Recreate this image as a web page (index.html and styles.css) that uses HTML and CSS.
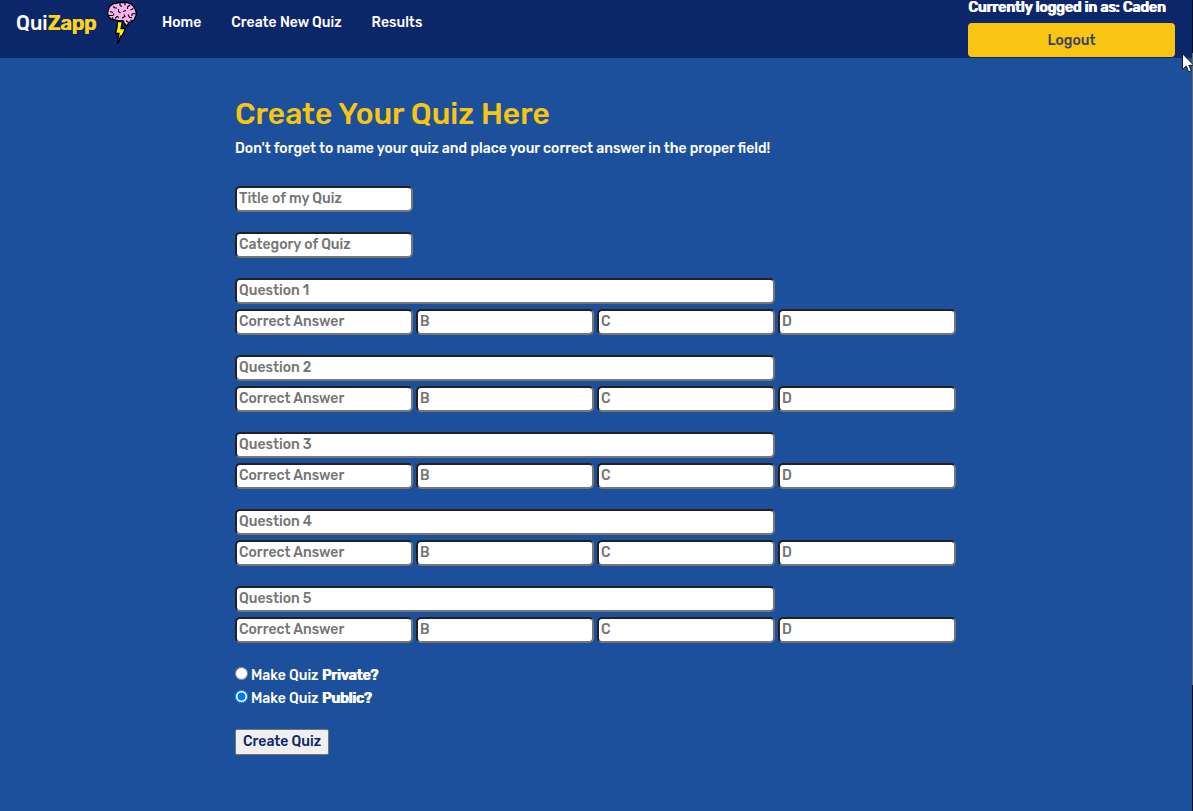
FILE: index.html
```html
<!DOCTYPE html>
<html lang="en">
<head>
<meta charset="utf-8">
<title>QuiZapp - Create Quiz</title>
<link rel="stylesheet" href="styles.css">
</head>
<body>
<div class="page">
  <header class="navbar">
    <a class="brand" href="#"><span class="brand-name">Qui<b class="brand-zap">Zapp</b></span>
      <svg class="brand-logo" viewBox="0 0 32 44" aria-hidden="true">
        <path d="M11.5 21.5h5L15 28.500h4.500L16.500 35l-2 1.500-2 6-1 1 .5-4 1-6h-3.500l1.500-6z" fill="#fff200" stroke="#000" stroke-width="1.3"/>
        <path d="M9 3.500l4-1h8l4 1.500 3 3 2 4.500v4l-2 4.500-3 2-2.500.5-1 3h-1.500l-2-3-1-2-4 .5-4-1-4-1-2.500-2.500-1-4 2-6 4-3z" fill="#f8b4f0" stroke="#000" stroke-width="1.3"/>
        <path d="M7 6.500l2 1.500h2M4 11.500l3 1M3 15.500h4l1-2M14 3v2.500l2 1M19 3v2.500M24 5l-2.500 2v2M27.500 8.500l-3 1.500M12.500 9v2.500l2 1.500M17 11.500l3-1M29 13.500l-3 .5v2M18 14.500l1 2-3 1.500M9 18.500l2-2 2 1M22 14.500l1.500 3h2.500M27 20.500l-3-.5M20 20.500l2 1.500M6 18.500l1-1" fill="none" stroke="#000" stroke-width="1.1"/>
      </svg>
    </a>
    <nav class="links">
      <a href="#">Home</a>
      <a href="#">Create New Quiz</a>
      <a href="#">Results</a>
    </nav>
    <div class="account">
      <strong class="user">Currently logged in as: Caden</strong>
      <button class="logout" type="button">Logout</button>
    </div>
  </header>

  <main class="content">
    <h1>Create Your Quiz Here</h1>
    <p class="hint">Don't forget to name your quiz and place your correct answer in the proper field!</p>
    <form class="quiz">
      <div class="row"><input type="text" placeholder="Title of my Quiz" aria-label="Title of my Quiz"></div>
      <div class="row"><input type="text" placeholder="Category of Quiz" aria-label="Category of Quiz"></div>
      <div class="row">
        <input class="question" type="text" placeholder="Question 1" aria-label="Question 1">
        <input type="text" placeholder="Correct Answer" aria-label="Question 1 correct answer">
        <input type="text" placeholder="B" aria-label="Question 1 answer B">
        <input type="text" placeholder="C" aria-label="Question 1 answer C">
        <input type="text" placeholder="D" aria-label="Question 1 answer D">
      </div>
      <div class="row">
        <input class="question" type="text" placeholder="Question 2" aria-label="Question 2">
        <input type="text" placeholder="Correct Answer" aria-label="Question 2 correct answer">
        <input type="text" placeholder="B" aria-label="Question 2 answer B">
        <input type="text" placeholder="C" aria-label="Question 2 answer C">
        <input type="text" placeholder="D" aria-label="Question 2 answer D">
      </div>
      <div class="row">
        <input class="question" type="text" placeholder="Question 3" aria-label="Question 3">
        <input type="text" placeholder="Correct Answer" aria-label="Question 3 correct answer">
        <input type="text" placeholder="B" aria-label="Question 3 answer B">
        <input type="text" placeholder="C" aria-label="Question 3 answer C">
        <input type="text" placeholder="D" aria-label="Question 3 answer D">
      </div>
      <div class="row">
        <input class="question" type="text" placeholder="Question 4" aria-label="Question 4">
        <input type="text" placeholder="Correct Answer" aria-label="Question 4 correct answer">
        <input type="text" placeholder="B" aria-label="Question 4 answer B">
        <input type="text" placeholder="C" aria-label="Question 4 answer C">
        <input type="text" placeholder="D" aria-label="Question 4 answer D">
      </div>
      <div class="row">
        <input class="question" type="text" placeholder="Question 5" aria-label="Question 5">
        <input type="text" placeholder="Correct Answer" aria-label="Question 5 correct answer">
        <input type="text" placeholder="B" aria-label="Question 5 answer B">
        <input type="text" placeholder="C" aria-label="Question 5 answer C">
        <input type="text" placeholder="D" aria-label="Question 5 answer D">
      </div>
      <div class="visibility">
        <div class="option"><input type="radio" id="private" name="visibility"><label for="private">Make Quiz <b>Private?</b></label></div>
        <div class="option"><input type="radio" id="public" name="visibility" checked><label for="public">Make Quiz <b>Public?</b></label></div>
      </div>
      <button class="submit" type="submit">Create Quiz</button>
    </form>
  </main>
</div>
<div class="edge"><div class="thumb"></div></div>
<svg class="pointer" viewBox="0 0 11 20" aria-hidden="true"><path d="M.5.8v15.7l3.7-3.4 2.5 5.7 2.6-1.1-2.5-5.4h5z" fill="#fff" stroke="#101828"/></svg>
</body>
</html>
```

FILE: styles.css
```css
* { box-sizing: border-box; }

body {
  margin: 0;
  min-height: 100vh;
  display: flex;
  background: #1d509c;
  color: #fff;
  font: 500 14px/20px Rubik, Inter, "Liberation Sans", sans-serif;
}

a { color: inherit; text-decoration: none; }

/* Emphasis thickens the medium weight without widening the text. */
b, strong { font-weight: 500; text-shadow: 1px 0 0 currentColor; }

.page { flex: 1; }

.navbar {
  display: flex;
  height: 58px;
  padding: 0 17px 0 16px;
  background: #0c266a;
}

.brand { display: flex; gap: 10px; }
.brand-name { font-size: 20px; line-height: 46px; }
.brand-zap { color: #fad41c; }
.brand-logo { width: 32px; height: 44px; }

.links {
  display: flex;
  gap: 30px;
  margin-left: 24px;
  line-height: 46px;
}

.account {
  display: flex;
  flex-direction: column;
  width: 207px;
  margin-left: auto;
}
.user { line-height: 16px; white-space: nowrap; }
.logout {
  height: 34px;
  margin-top: 7px;
  padding: 2px 0 0;
  border: 0;
  border-radius: 4px;
  background: #f9c513;
  color: #3b4261;
  font: inherit;
}

.content { max-width: 722px; margin: 0 auto; padding-top: 36px; }

h1 {
  margin: 0;
  color: #f9c513;
  font-size: 30px;
  font-weight: 500;
  line-height: 40px;
}
.hint { margin: 5px 0 27px; }

.quiz { display: flex; flex-direction: column; gap: 20px; }
.row {
  display: grid;
  grid-template-columns: repeat(4, minmax(0, 178px));
  gap: 5px 3px;
}
.row input {
  width: 100%;
  height: 26px;
  padding: 0 2px 2px;
  border: 2px solid;
  border-color: #212121 #767676 #767676 #212121;
  border-radius: 5px;
  background: #fff;
  font: inherit;
}
.row input::placeholder { color: #757575; opacity: 1; }
.row .question { grid-column: 1 / 4; }
.row .question + input { grid-column: 1; }

.visibility {
  display: flex;
  flex-direction: column;
  gap: 3px;
  padding-top: 3px;
}
.option { display: flex; align-items: flex-start; gap: 3px; }
.option input { width: 13px; height: 13px; margin: 1px 0 0; }

.submit {
  align-self: flex-start;
  height: 26px;
  padding: 0 7px;
  border: 1px solid #767676;
  border-radius: 2px;
  background: #efefef;
  color: #0c266a;
  font: inherit;
}

.edge { width: 1px; padding-top: 53px; background: #050a14; }
.thumb { height: 632px; background: #686868; }

.pointer {
  position: absolute;
  top: 53px;
  right: 0;
  width: 11px;
  height: 20px;
}
```
